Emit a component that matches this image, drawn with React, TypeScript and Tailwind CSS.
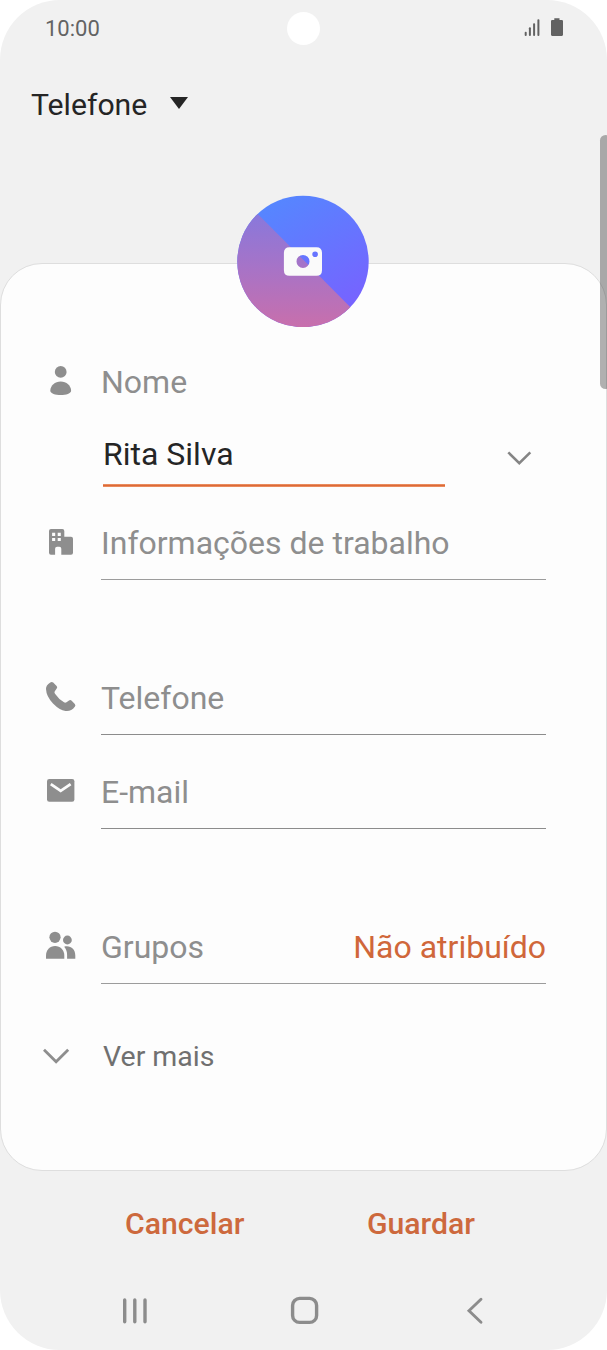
import type { ReactNode } from "react";

function Glyph({ children }: { children: ReactNode }) {
  return (
    <svg className="ml-[42px] mt-[17px] mr-[22px] h-9 w-9 shrink-0 fill-[#8e8e8e]" viewBox="0 0 36 36">
      {children}
    </svg>
  );
}

function StatusBar() {
  return (
    <div className="flex h-14 shrink-0 items-center pl-[45px] pr-[43px]">
      <span className="w-[242px] pt-0.5 text-[22px] leading-8 text-[#636363]">10:00</span>
      <div className="h-[33px] w-[33px] rounded-full bg-white" />
      <svg className="ml-auto h-5 w-[40px] fill-[#626262]" viewBox="524 18 40 20">
        <rect x="524.7" y="31.8" width="2" height="4.2" rx=".9" />
        <rect x="528.9" y="27.3" width="2" height="8.7" rx=".9" />
        <rect x="533.1" y="23.2" width="2" height="12.8" rx=".9" />
        <rect x="537.4" y="19.2" width="2" height="16.8" rx=".9" />
        <path d="M554.3 18.2h5.2v1.9h2.4q1.1 0 1.1 1.1v13.6q0 1.1-1.1 1.1h-9.8q-1.1 0-1.1-1.1v-13.6q0-1.1 1.1-1.1h2.2z" />
      </svg>
    </div>
  );
}

function Avatar() {
  return (
    <svg className="-mt-[69px] mr-px h-[132px] w-[132px] shrink-0 self-center" viewBox="0 0 132 132">
      <defs>
        <linearGradient id="blue" x1="0.2" y1="0" x2="0.8" y2="1">
          <stop offset="0" stopColor="#5389ff" />
          <stop offset="1" stopColor="#7a5fff" />
        </linearGradient>
        <linearGradient id="pink" gradientUnits="userSpaceOnUse" x1="0" y1="18" x2="0" y2="132">
          <stop offset="0" stopColor="#8878dc" />
          <stop offset="0.5" stopColor="#a873c6" />
          <stop offset="1" stopColor="#c86fac" />
        </linearGradient>
        <clipPath id="disc">
          <circle cx="66" cy="66.5" r="65.7" />
        </clipPath>
      </defs>
      <g clipPath="url(#disc)">
        <rect width="132" height="132" fill="url(#blue)" />
        <path d="M0-2L134 133H0z" fill="url(#pink)" />
      </g>
      <path
        fill="#fafafa"
        fillRule="evenodd"
        d="M52.5 52.2h26.9q5.6 0 5.6 5.6v17.4q0 5.6-5.6 5.6H52.5q-5.6 0-5.6-5.6V57.8q0-5.6 5.6-5.6zM59.5 66.4a6.5 6.5 0 1 0 13 0a6.5 6.5 0 1 0-13 0zM75.3 59.3a2.8 2.8 0 1 0 5.6 0a2.8 2.8 0 1 0-5.6 0z"
      />
    </svg>
  );
}

function Field({ icon, label, value, line }: { icon: ReactNode; label: string; value?: string; line: string }) {
  return (
    <div className="flex h-[72px] shrink-0">
      <Glyph>{icon}</Glyph>
      <div className={"flex w-[445px] items-center justify-between border-b pb-0.5 " + line}>
        <span className="text-[32px] leading-10 text-[#8e8e8e]">{label}</span>
        {value && <span className="text-[32px] leading-10 text-[#d0673a]">{value}</span>}
      </div>
    </div>
  );
}

export default function App() {
  return (
    <div className="h-[1350px] w-[607px] bg-white font-['Roboto',sans-serif]">
      <div className="relative flex h-full flex-col overflow-hidden rounded-[60px] bg-[#f1f1f1]">
        <StatusBar />
        <header className="flex h-[207px] shrink-0 items-start pl-[31px] pt-7">
          <span className="pt-px text-[30.2px] leading-10 text-[#252525]">Telefone</span>
          <svg className="ml-[23px] mt-[13px] h-3 w-[18px] fill-[#252525]" viewBox="0 0 18 12">
            <path d="M0 0h18L9 12z" />
          </svg>
        </header>

        <main className="flex h-[908px] shrink-0 flex-col rounded-[42px] border border-[#dedede] bg-[#fdfdfd]">
          <Avatar />
          <div className="mt-[19px] flex h-[72px] shrink-0">
            <Glyph>
              <circle cx="17.7" cy="8.9" r="5.9" />
              <path d="M7.3 27.8C7.3 22.8 12 18.6 17.7 18.6S28.1 22.8 28.1 27.8C28.1 30.6 23 32.1 17.7 32.1S7.3 30.6 7.3 27.8z" />
            </Glyph>
            <span className="self-center text-[32px] leading-10 text-[#8e8e8e]">Nome</span>
          </div>
          <div className="ml-[102px] flex h-[69px] shrink-0 items-start">
            <div className="h-full w-[342px]">
              <div className="flex h-[66px] items-start pt-4">
                <span className="text-[32px] leading-10 text-[#252525]">Rita Silva</span>
              </div>
              <div className="h-[3px] bg-linear-to-b from-[#f09a6e] via-[#dc6a38] to-[#f09a6e]" />
            </div>
            <svg className="ml-[61px] mt-[29px] h-[20px] w-[26px]" viewBox="506 447 26 20" fill="none" stroke="#858585" strokeWidth="2.6">
              <path d="M508.3 452.4l11 10.7 11-10.7" />
            </svg>
          </div>

          <div className="mt-[21px]">
            <Field
              label="Informações de trabalho"
              line="border-[#9c9c9c]"
              icon={
                <path
                  fillRule="evenodd"
                  d="M8 4h11.3q2 0 2 2v5.7H28q2 0 2 2V27.7q0 2-2 2h-9.7v-6q0-2-2-2h-2.2q-2 0-2 2v6H8q-2 0-2-2V6q0-2 2-2zM9.1 7.8v3.1h3.1V7.8zM14.7 7.8v3.1h3.1V7.8zM9.1 13v3.1h3.1V13zM14.7 13v3.1h3.1V13z"
                />
              }
            />
          </div>
          <div className="mt-[83px] flex flex-col gap-[22px]">
            <Field
              label="Telefone"
              line="border-[#8c8c8c]"
              icon={
                <path d="M7.3 2.4Q8.8 1.5 10.2 2.5L13.6 6Q14.8 7.1 13.7 8.6L11.8 11.2Q11 12.4 12 13.8Q15.8 19.4 21 22.3Q22.2 23 23.5 22.2L26 20.4Q27.4 19.5 28.7 20.7L31.8 24Q33 25.5 31.8 26.8Q28.1 31.7 22.5 31Q16.7 30.2 10 23.4Q3.3 16.5 3 9Q2.8 5 7.3 2.4z" />
              }
            />
            <Field
              label="E-mail"
              line="border-[#8c8c8c]"
              icon={
                <>
                  <rect x="4" y="5" width="27.4" height="22.8" rx="2.3" />
                  <path d="M7.8 10.1l9.9 6.8 9.9-6.8" fill="none" stroke="#fdfdfd" strokeWidth="2.8" />
                </>
              }
            />
          </div>
          <div className="mt-[83px]">
            <Field
              label="Grupos"
              value="Não atribuído"
              line="border-[#9c9c9c]"
              icon={
                <>
                  <circle cx="12" cy="8.3" r="5.6" />
                  <path d="M3 29.7v-3.2C3 21 6.8 16.9 12.1 16.9s9.2 4.1 9.2 9.6v3.2z" />
                  <circle cx="24.4" cy="11" r="4.4" />
                  <path d="M21.2 17.7C27.5 16.2 32.3 20 32.3 26.4v3.3h-8.2v-3.8c0-3.4-1-6-2.9-8.2z" />
                </>
              }
            />
          </div>
          <div className="mt-[45px] flex h-14 shrink-0 items-center">
            <svg className="-mt-[3px] ml-[41px] mr-[34px] h-[18px] w-[28px]" viewBox="42 1046 28 18" fill="none" stroke="#8e8e8e" strokeWidth="2.8">
              <path d="M44 1048.7l12.1 12 12.1-12" />
            </svg>
            <span className="-ml-px text-[28.5px] leading-10 text-[#707070]">Ver mais</span>
          </div>
        </main>

        <footer className="flex grow flex-col">
          <div className="mt-[33px] flex h-10 items-center pl-[125px] text-[30.2px] font-medium text-[#cd693d]">
            <span className="w-[242px]">Cancelar</span>
            <span>Guardar</span>
          </div>
          <svg className="mt-12 h-[36px] w-full" viewBox="0 1292 607 36" fill="none" stroke="#8c8c8c" strokeWidth="3.4" strokeLinecap="round">
            <path d="M124.7 1300v21.8M134.8 1300v21.8M145 1300v21.8" />
            <rect x="292.6" y="1298.4" width="24" height="24" rx="7" />
            <path d="M481 1299.2l-12 11.5 12 11.5" strokeWidth="2.9" />
          </svg>
        </footer>
        <div className="absolute -right-1 top-[135px] h-[254px] w-[11px] rounded-[6px] bg-black/30" />
      </div>
    </div>
  );
}
